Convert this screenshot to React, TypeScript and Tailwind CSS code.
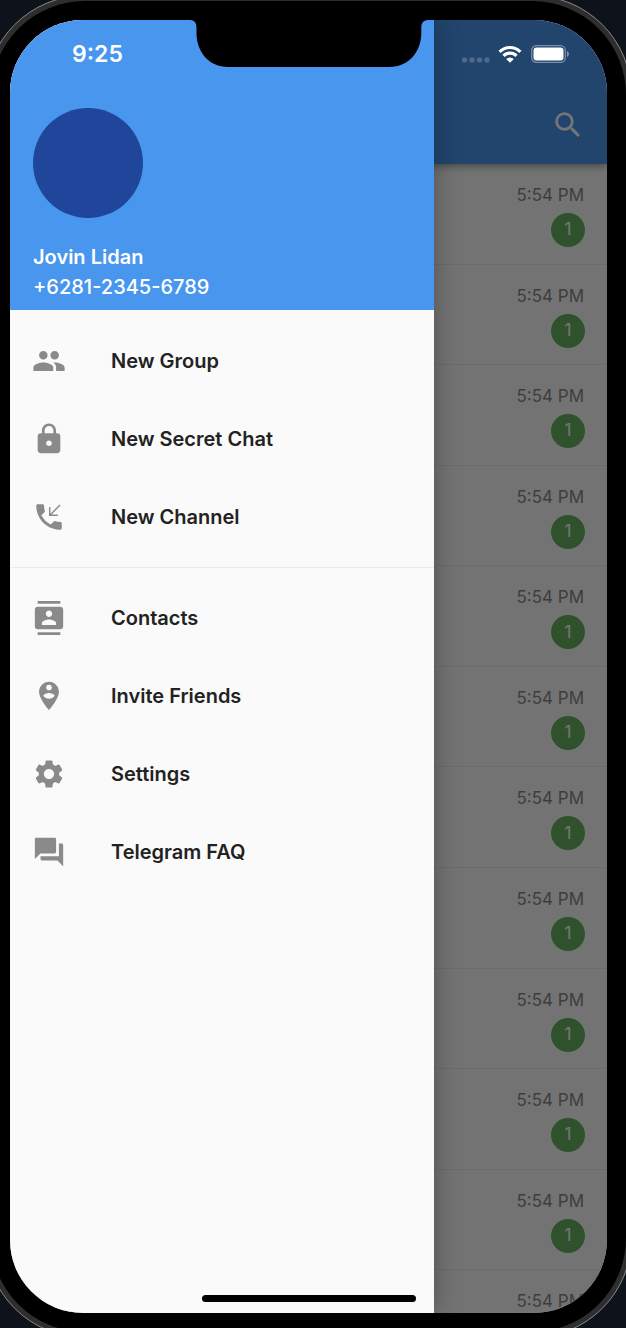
import type { ReactNode } from "react";
import {
  MdContacts,
  MdForum,
  MdLock,
  MdPeople,
  MdPersonPinCircle,
  MdSearch,
  MdSettings,
} from "react-icons/md";

type MenuEntry = { label: string; icon: ReactNode };

function PhoneIncomingIcon() {
  return (
    <svg viewBox="0 0 24 24" className="size-[34px]" aria-hidden="true">
      <path
        fill="currentColor"
        d="M20 15.5c-1.25 0-2.45-.2-3.57-.57-.35-.11-.74-.03-1.02.24l-2.2 2.2c-2.83-1.44-5.15-3.75-6.59-6.58l2.2-2.21c.28-.27.36-.66.25-1.01C8.7 6.45 8.5 5.25 8.5 4c0-.55-.45-1-1-1H4c-.55 0-1 .45-1 1 0 9.39 7.61 17 17 17 .55 0 1-.45 1-1v-3.5c0-.55-.45-1-1-1z"
      />
      <path
        fill="none"
        stroke="currentColor"
        strokeWidth="1"
        d="M19.8 3.5 12.6 10.7M12.5 5v5.8H18.2"
      />
    </svg>
  );
}

const primaryEntries: MenuEntry[] = [
  { label: "New Group", icon: <MdPeople className="size-[34px]" /> },
  { label: "New Secret Chat", icon: <MdLock className="size-[34px]" /> },
  { label: "New Channel", icon: <PhoneIncomingIcon /> },
];

const secondaryEntries: MenuEntry[] = [
  { label: "Contacts", icon: <MdContacts className="size-[34px]" /> },
  { label: "Invite Friends", icon: <MdPersonPinCircle className="size-[34px]" /> },
  { label: "Settings", icon: <MdSettings className="size-[34px]" /> },
  { label: "Telegram FAQ", icon: <MdForum className="size-[34px]" /> },
];

const chats = Array.from({ length: 12 }, (_, id) => ({
  id,
  time: "5:54 PM",
  unread: id < 11 ? 1 : 0,
}));

function MenuSection({ entries }: { entries: MenuEntry[] }) {
  return (
    <ul>
      {entries.map((entry) => (
        <li key={entry.label}>
          <a href="#" className="flex h-[78px] items-center gap-[45px] px-[22px] text-[#8a8a8a]">
            {entry.icon}
            <span className="text-[20px] font-semibold text-[#222222]">{entry.label}</span>
          </a>
        </li>
      ))}
    </ul>
  );
}

function Drawer() {
  return (
    <aside className="absolute inset-y-0 left-0 w-[71%] bg-[#fafafa] shadow-[0_0_24px_rgba(0,0,0,0.3)]">
      <header className="flex h-[290px] flex-col bg-[#4896ee] px-[23px] pt-[88px] text-[20px] leading-[30px] text-white">
        <div className="mb-[24px] size-[110px] rounded-full bg-[#20469b]" />
        <p className="font-semibold">Jovin Lidan</p>
        <p className="font-medium">+6281-2345-6789</p>
      </header>
      <nav className="pt-3">
        <MenuSection entries={primaryEntries} />
        <hr className="my-[11px] border-[#ebebeb]" />
        <MenuSection entries={secondaryEntries} />
      </nav>
    </aside>
  );
}

function ChatsPage() {
  return (
    <main className="h-full bg-[#fafafa]">
      <header className="relative flex h-[144px] items-end justify-end bg-[#4896ee] px-[22px] pb-[22px] shadow-[0_2px_8px_rgba(0,0,0,0.4)]">
        <button type="button" aria-label="Search" className="text-white">
          <MdSearch className="size-[34px]" />
        </button>
      </header>
      <ul className="flex h-[1207px] flex-col">
        {chats.map((chat) => (
          <li
            key={chat.id}
            className="flex flex-1 flex-col items-end gap-1.5 border-b border-[#ececec] pt-[19px] pr-[22px]"
          >
            <time className="pr-px text-[17px] leading-6 text-[#888888]">{chat.time}</time>
            {chat.unread > 0 && (
              <span className="flex size-[34px] items-center justify-center rounded-full bg-[#67b460] text-[17px] text-white">
                {chat.unread}
              </span>
            )}
          </li>
        ))}
      </ul>
    </main>
  );
}

function StatusBar() {
  return (
    <div className="absolute inset-x-0 top-0 flex h-[68px] items-center justify-between pr-[37px] pl-[62px] text-white">
      <time className="text-[23px] font-semibold">9:25</time>
      <div className="flex items-center gap-2">
        <svg viewBox="0 0 28 6" className="mt-3 h-[6px] w-[28px]" fill="#fff" opacity="0.2" aria-hidden="true">
          <rect x="0" y="0.5" width="5" height="5" rx="1.6" />
          <rect x="7.5" y="0.5" width="5" height="5" rx="1.6" />
          <rect x="15" y="0.5" width="5" height="5" rx="1.6" />
          <rect x="22.5" y="0.5" width="5" height="5" rx="1.6" />
        </svg>
        <svg viewBox="0 0 24 18" className="h-[18px] w-[24px]" fill="none" stroke="#fff" strokeWidth="3.2" aria-hidden="true">
          <path d="M1.6 6.8a14.7 14.7 0 0 1 20.8 0" />
          <path d="M5.5 10.9a9.2 9.2 0 0 1 13 0" />
          <path fill="#fff" stroke="none" d="m12 17.8-3.8-3.8a5.4 5.4 0 0 1 7.6 0z" />
        </svg>
        <svg viewBox="0 0 39 18" className="ml-[1px] h-[18px] w-[39px]" aria-hidden="true">
          <rect x="0.7" y="0.7" width="33.6" height="16.6" rx="4.6" fill="none" stroke="#fff" strokeOpacity="0.4" strokeWidth="1.3" />
          <rect x="2.5" y="2.5" width="30" height="13" rx="3" fill="#fff" />
          <path d="M36 6v6c1-.4 1.9-1.6 1.9-3S37 6.400 36 6z" fill="#fff" fillOpacity="0.45" />
        </svg>
      </div>
    </div>
  );
}

function Notch() {
  return (
    <div className="pointer-events-none absolute inset-x-0 top-0 flex justify-center">
      <svg viewBox="0 0 240 48" className="h-[48px] w-[240px]" aria-hidden="true">
        <path d="M0 0C5.500 0 7.500 2.500 7.500 8V13C7.500 32 20 47 39 47H200.500C219.500 47 232.300 32 232.300 13V8C232.300 2.500 234.500 0 240 0Z" fill="#000" />
      </svg>
    </div>
  );
}

export default function App() {
  return (
    <div
      className="flex h-screen flex-col overflow-hidden bg-[#0d121b]"
      style={{ fontFamily: 'Inter, "Liberation Sans", sans-serif' }}
    >
      <div className="-mt-[5px] -mr-[6px] -mb-[10px] -ml-[15px] flex min-h-0 flex-1 flex-col rounded-[100px] border border-[#8b8787] bg-[#2e2e2e] p-[5px]">
        <div className="flex min-h-0 flex-1 flex-col rounded-[94px] bg-black p-[19px]">
          <div className="relative min-h-0 flex-1 overflow-hidden rounded-[73px]">
            <ChatsPage />
            <div className="absolute inset-0 bg-black/54" />
            <Drawer />
            <StatusBar />
            <Notch />
            <div className="absolute inset-x-0 bottom-[11px] flex justify-center">
              <div className="h-[7px] w-[214px] rounded-full bg-black" />
            </div>
          </div>
        </div>
      </div>
    </div>
  );
}
